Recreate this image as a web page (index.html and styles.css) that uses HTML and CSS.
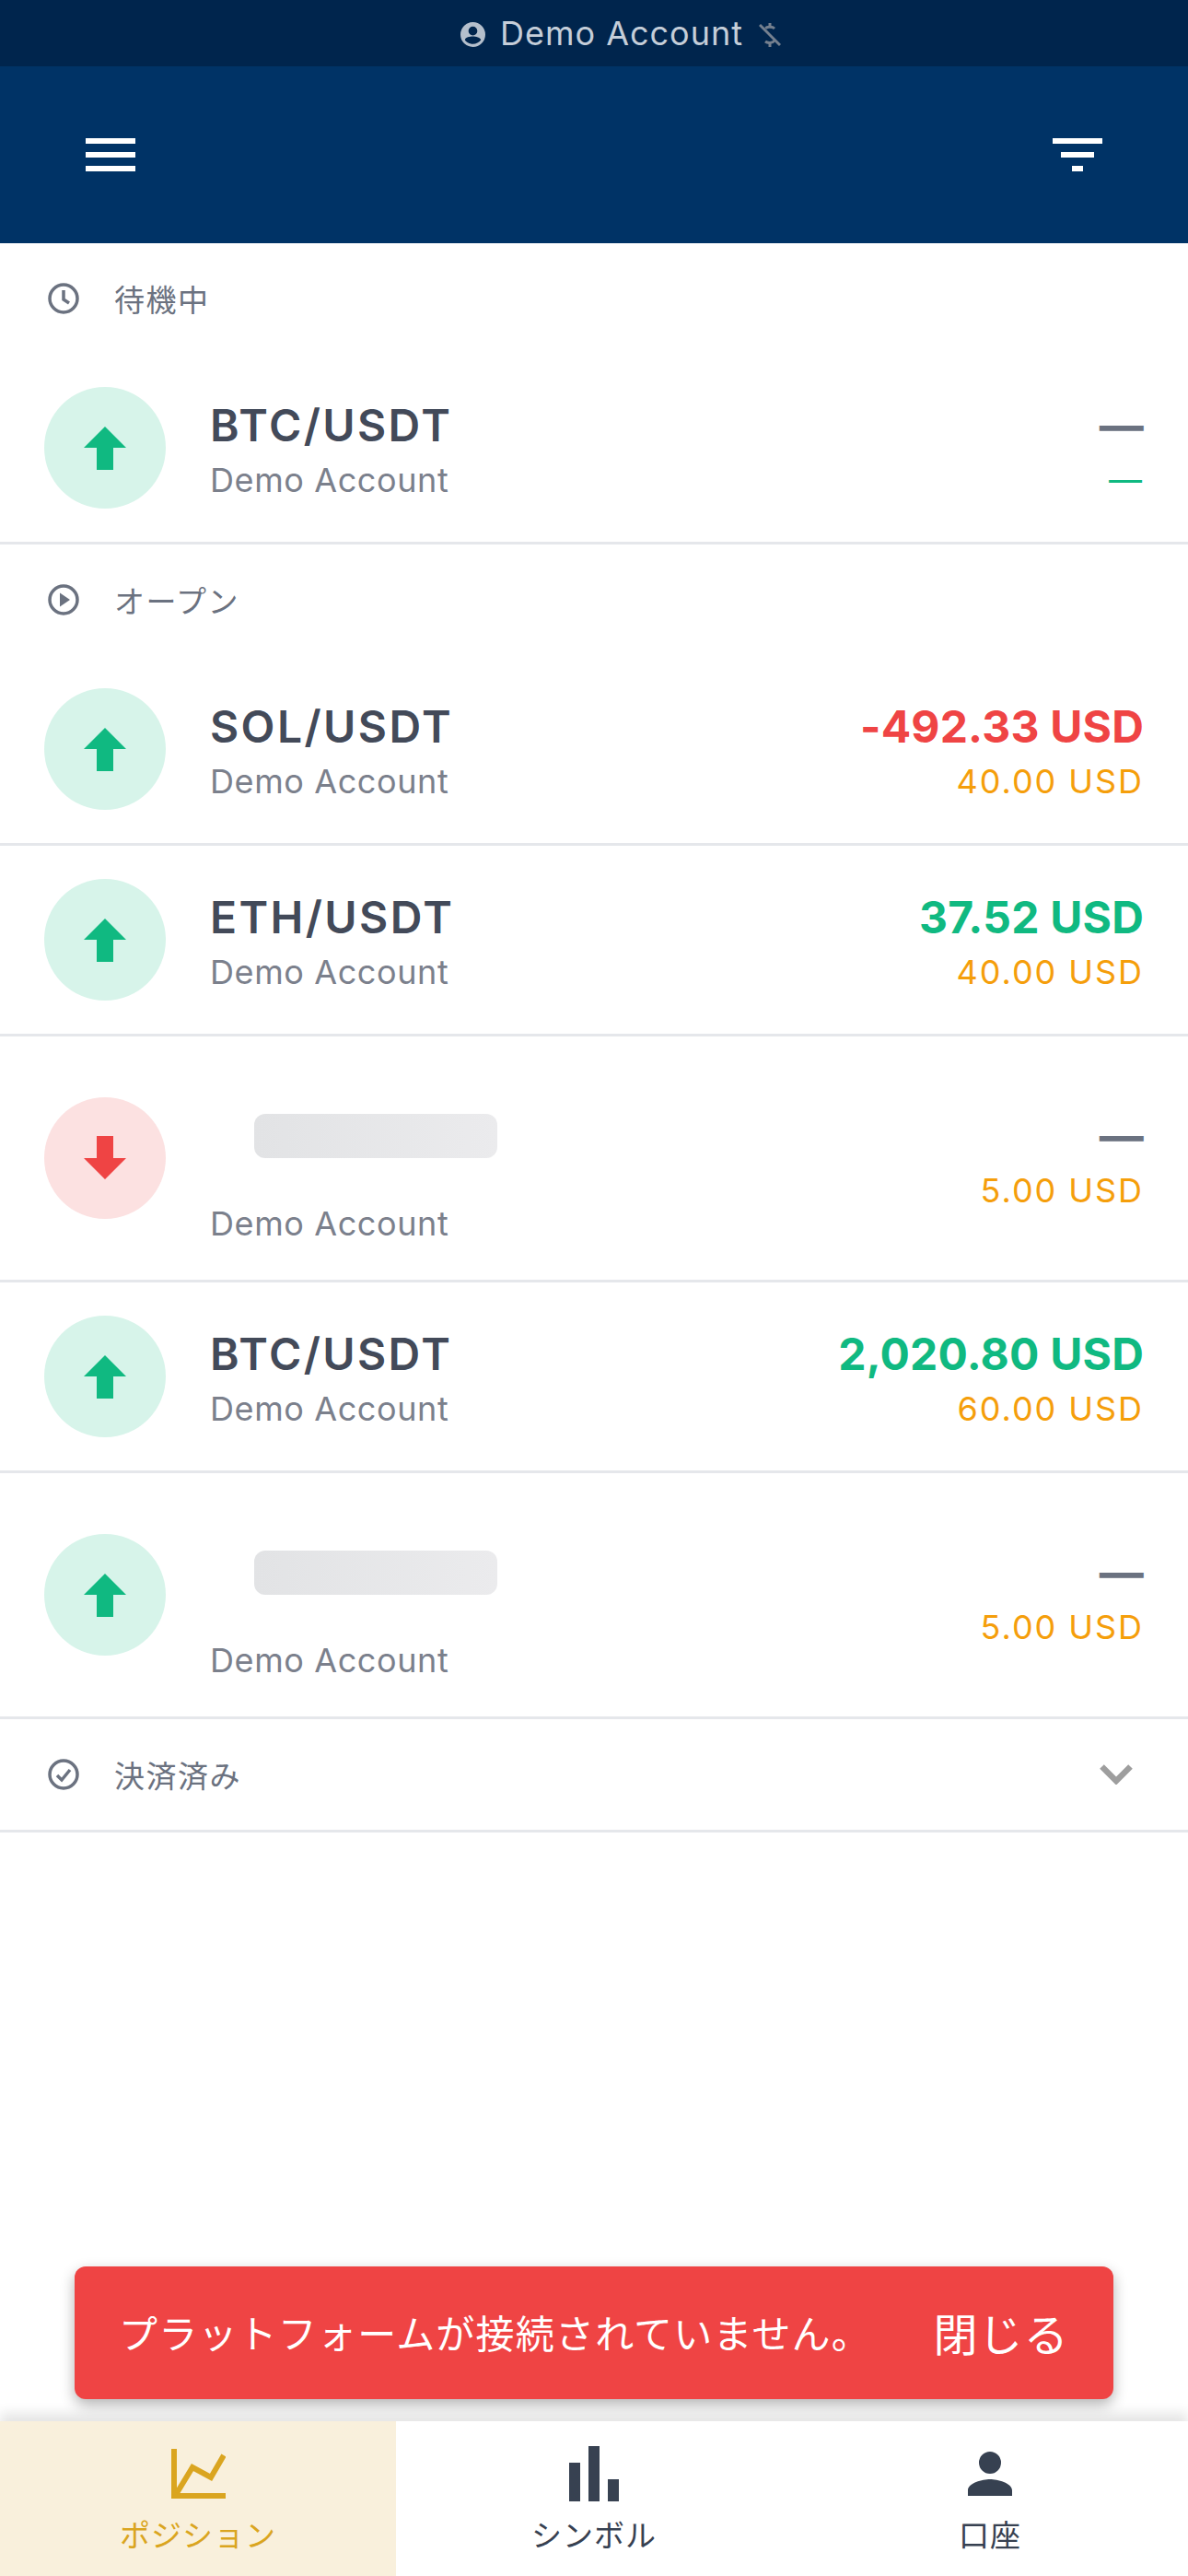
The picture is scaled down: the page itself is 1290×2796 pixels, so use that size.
FILE: index.html
```html
<!DOCTYPE html>
<html lang="ja">
<head>
<meta charset="utf-8">
<title>Positions</title>
<link rel="stylesheet" href="styles.css">
</head>
<body>
<div class="app">
  <div class="status">
    <svg class="status-user" viewBox="0 0 28 28"><path fill="#b4bfcc" d="M14 0a14 14 0 1 0 0 28a14 14 0 0 0 0-28zm0 5a5 5 0 1 1 0 10a5 5 0 0 1 0-10zm0 19.500c-3.600 0-6.900-1.700-9-4.400c.1-2.700 6-4.100 9-4.100s8.900 1.400 9 4.100c-2.100 2.700-5.400 4.400-9 4.400z"/></svg>
    <span class="status-name">Demo Account</span>
    <svg class="status-off" viewBox="0 0 24 28"><g fill="none" stroke="#75808f" stroke-width="3"><path d="M1 3l22 22"/><path d="M12 1v4M12 23v4"/><path d="M17 7c-2-2-8-2.500-9.500 0M7 21c2.500 2 8 2 10-1"/></g></svg>
  </div>
  <header class="topbar">
    <svg class="top-icon" viewBox="0 0 54 36"><path fill="#fff" d="M0 0h54v6H0zM0 15h54v6H0zM0 30h54v6H0z"/></svg>
    <svg class="top-icon" viewBox="0 0 54 36"><path fill="#fff" d="M0 0h54v6H0zM9 15h36v6H9zM21 30h12v6H21z"/></svg>
  </header>
  <main class="content">
    <div class="section">
      <svg class="section-icon" viewBox="0 0 34 34"><g fill="none" stroke="#6b7280" stroke-width="3.500"><circle cx="17" cy="17" r="15"/><path d="M17 8v10l6 4"/></g></svg>
      <span class="section-label">待機中</span>
    </div>
    <div class="row">
      <div class="badge badge-up"><svg class="arrow" viewBox="0 0 132 132"><path fill="#10b981" d="M66 43L89 66H75V90H57V66H43z"/></svg></div>
      <div class="info"><div class="symbol">BTC/USDT</div><div class="account">Demo Account</div></div>
      <div class="nums"><div class="pnl muted">—</div><div class="sub green">—</div></div>
    </div>
    <div class="section">
      <svg class="section-icon" viewBox="0 0 34 34"><circle cx="17" cy="17" r="15" fill="none" stroke="#6b7280" stroke-width="3.500"/><path fill="#6b7280" d="M13 9.500L24 17L13 24.500z"/></svg>
      <span class="section-label">オープン</span>
    </div>
    <div class="row">
      <div class="badge badge-up"><svg class="arrow" viewBox="0 0 132 132"><path fill="#10b981" d="M66 43L89 66H75V90H57V66H43z"/></svg></div>
      <div class="info"><div class="symbol">SOL/USDT</div><div class="account">Demo Account</div></div>
      <div class="nums"><div class="pnl red">-492.33 USD</div><div class="sub amber">40.00 USD</div></div>
    </div>
    <div class="row">
      <div class="badge badge-up"><svg class="arrow" viewBox="0 0 132 132"><path fill="#10b981" d="M66 43L89 66H75V90H57V66H43z"/></svg></div>
      <div class="info"><div class="symbol">ETH/USDT</div><div class="account">Demo Account</div></div>
      <div class="nums"><div class="pnl green">37.52 USD</div><div class="sub amber">40.00 USD</div></div>
    </div>
    <div class="row row-loading">
      <div class="badge badge-down"><svg class="arrow" viewBox="0 0 132 132"><path fill="#ef4444" d="M57 42H75V66H89L66 89L43 66H57z"/></svg></div>
      <div class="info"><div class="skeleton"></div><div class="account">Demo Account</div></div>
      <div class="nums"><div class="pnl muted">—</div><div class="sub amber">5.00 USD</div></div>
    </div>
    <div class="row">
      <div class="badge badge-up"><svg class="arrow" viewBox="0 0 132 132"><path fill="#10b981" d="M66 43L89 66H75V90H57V66H43z"/></svg></div>
      <div class="info"><div class="symbol">BTC/USDT</div><div class="account">Demo Account</div></div>
      <div class="nums"><div class="pnl green">2,020.80 USD</div><div class="sub amber">60.00 USD</div></div>
    </div>
    <div class="row row-loading">
      <div class="badge badge-up"><svg class="arrow" viewBox="0 0 132 132"><path fill="#10b981" d="M66 43L89 66H75V90H57V66H43z"/></svg></div>
      <div class="info"><div class="skeleton"></div><div class="account">Demo Account</div></div>
      <div class="nums"><div class="pnl muted">—</div><div class="sub amber">5.00 USD</div></div>
    </div>
    <div class="section section-closed">
      <svg class="section-icon" viewBox="0 0 34 34"><g fill="none" stroke="#6b7280" stroke-width="3.500"><circle cx="17" cy="17" r="15"/><path d="M10 18l5 5l9-11"/></g></svg>
      <span class="section-label">決済済み</span>
      <svg class="chevron" viewBox="0 0 36 22"><path fill="none" stroke="#9e9e9e" stroke-width="6.500" d="M2.500 2.500L18 18L33.500 2.500"/></svg>
    </div>
  </main>
  <div class="toast">
    <span class="toast-text">プラットフォームが接続されていません。</span>
    <span class="toast-close">閉じる</span>
  </div>
  <nav class="tabs">
    <div class="tab tab-active">
      <svg class="tab-icon" viewBox="-1 -3 60 60"><g fill="none" stroke="#daa520" stroke-width="6"><path d="M3 0V51H60"/><path d="M6 48L23 20L43 31L57 7"/></g></svg>
      <span class="tab-label">ポジション</span>
    </div>
    <div class="tab">
      <svg class="tab-icon" viewBox="-3 0 60 60"><path fill="#374151" d="M0 18H12V60H0zM21 0H33V60H21zM42 36H54V60H42z"/></svg>
      <span class="tab-label">シンボル</span>
    </div>
    <div class="tab">
      <svg class="tab-icon" viewBox="-6 -6 60 60"><path fill="#374151" d="M24 0a12 12 0 1 1 0 24a12 12 0 0 1 0-24zM0 48v-6c0-8 16-12 24-12s24 4 24 12v6z"/></svg>
      <span class="tab-label">口座</span>
    </div>
  </nav>
</div>
</body>
</html>
```
FILE: styles.css
```css
* { box-sizing: border-box; }
html, body { margin: 0; padding: 0; background: #fff; }
body { font-family: Inter, "Noto Sans CJK JP", sans-serif; }
.app { position: relative; width: 1290px; height: 2796px; display: flex; flex-direction: column; overflow: hidden; }
.status { height: 72px; background: #00254d; display: flex; align-items: center; justify-content: center; padding-left: 58px; }
.status-user { width: 27px; height: 27px; flex: none; margin-top: 3px; }
.status-name { color: #c5ced9; font-size: 36px; letter-spacing: 1px; margin: 0 17px 0 16px; }
.status-off { width: 24px; height: 28px; flex: none; margin-top: 4px; }
.topbar { height: 192px; background: #003366; display: flex; align-items: center; justify-content: space-between; padding: 0 93px; }
.top-icon { width: 54px; height: 36px; flex: none; }
.content { flex: 1; min-height: 0; }
.section { height: 120px; padding: 0 60px 0 52px; display: flex; align-items: center; }
.section-icon { width: 34px; height: 34px; flex: none; }
.section-label { margin-left: 38px; font-size: 33px; letter-spacing: 1.5px; color: #6b7280; }
.section-closed { height: 123px; border-bottom: 3px solid #e5e7eb; }
.chevron { width: 36px; height: 22px; margin-left: auto; }
.row { height: 207px; display: flex; align-items: center; padding: 0 48px; border-bottom: 3px solid #e5e7eb; }
.row-loading { height: 267px; }
.badge { width: 132px; height: 132px; border-radius: 50%; flex: none; }
.badge-up { background: #d7f4ea; }
.badge-down { background: #fce1e1; }
.arrow { width: 132px; height: 132px; display: block; }
.info { margin-left: 48px; flex: 1; display: flex; flex-direction: column; }
.symbol { margin-top: 8px; font-size: 48px; font-weight: 600; line-height: 60px; letter-spacing: 2.4px; color: #434a59; }
.account { margin-top: 2px; font-size: 36px; line-height: 54px; letter-spacing: .6px; color: #7b808c; }
.skeleton { width: 264px; height: 48px; border-radius: 12px; margin: 50px 0 42px 48px; background: linear-gradient(90deg, #e2e3e5, #ebebed); }
.nums { text-align: right; white-space: nowrap; }
.pnl { margin-top: 8px; font-size: 48px; font-weight: 700; line-height: 60px; letter-spacing: .2px; }
.sub { margin-top: 2px; font-size: 36px; line-height: 54px; letter-spacing: 1.95px; }
.muted { color: #6b7280; }
.red { color: #ef4444; }
.green { color: #10b981; }
.amber { color: #f59e0b; }
.toast { position: absolute; left: 81px; top: 2460px; width: 1128px; height: 144px; background: #ef4444; border-radius: 12px; box-shadow: 0 6px 15px rgba(0,0,0,.3); display: flex; align-items: center; justify-content: space-between; padding: 0 48px; color: #fff; }
.toast-text { font-size: 42px; letter-spacing: 1.2px; margin-top: -3px; }
.toast-close { font-size: 48px; letter-spacing: 1.2px; margin-top: -3px; }
.tabs { height: 168px; display: grid; grid-template-columns: repeat(3, 430px); background: #fff; box-shadow: 0 -9px 12px rgba(0,0,0,.1); position: relative; }
.tab { display: flex; flex-direction: column; align-items: center; justify-content: flex-end; padding-bottom: 24px; }
.tab-active { background: #f9f0dc; }
.tab-icon { height: 60px; width: 60px; margin-bottom: 17px; }
.tab-label { font-size: 33px; line-height: 40px; letter-spacing: 1px; color: #374151; }
.tab-active .tab-label { color: #daa520; }
```
